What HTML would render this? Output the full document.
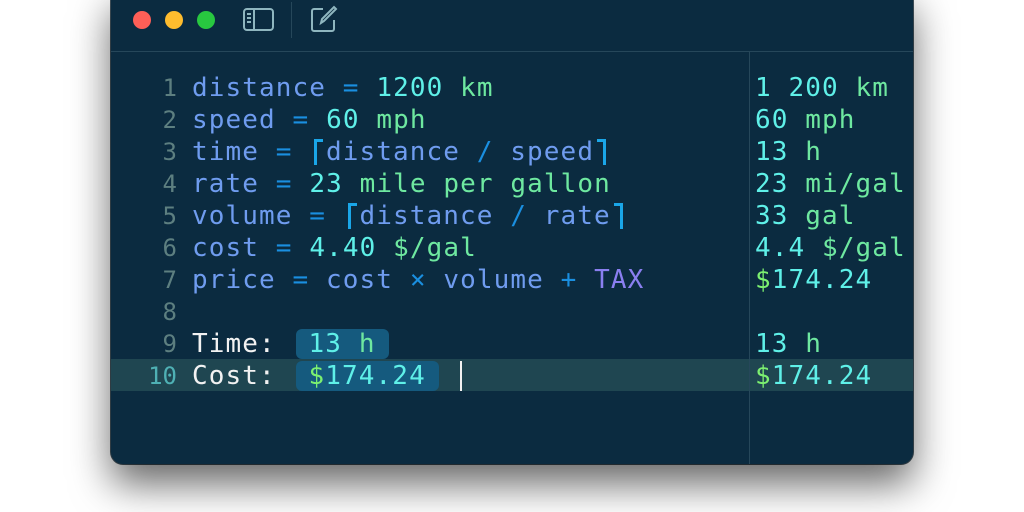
<!DOCTYPE html><html><head><style>
body{margin:0;width:1024px;height:512px;background:#fff;overflow:hidden;position:relative}
.win{position:absolute;left:111px;top:-12px;width:802px;height:476px;background:#0b2b40;border-radius:12px;box-shadow:0 20px 40px rgba(0,0,0,.6),0 0 0 1px #45555f;overflow:hidden}
.tb{position:absolute;left:0;top:0;width:802px;height:63px;border-bottom:1px solid #26475a}
.dot{position:absolute;top:23px;width:18px;height:18px;border-radius:50%}
.div{position:absolute;left:638px;top:63px;width:1px;height:420px;background:#26475a}
.hl{position:absolute;left:0;top:371px;width:802px;height:32px;background:#1f4651}
.r{position:absolute;height:32px;line-height:32px;font-family:"DejaVu Sans Mono",monospace;font-size:26px;letter-spacing:1.1px;white-space:pre;color:#6f9cef}
.n{position:absolute;left:0;width:66px;text-align:right;color:#5d7f80;font-family:"DejaVu Sans Mono",monospace;font-size:24px;height:32px;line-height:32px}
.o{color:#1a8fe0}.c{color:#5ff0e8}.u{color:#6ee8a0}.w{color:#f2f2f2}.t{color:#8a7ff0}.g{color:#7cf070}
.b{color:#1aa6e8;display:inline-block;width:16.7px;height:30px;vertical-align:top;position:relative}
.b i{position:absolute;top:3px;bottom:1px;width:3px;background:#1aa6e8}
.b i:after{content:"";position:absolute;top:0;height:3px;width:9px;background:#1aa6e8}
.bl i{left:5px}.bl i:after{left:0}
.br i{right:5px}.br i:after{right:0}
.chip{background:#155a7e;border-radius:6px;padding:0 13px;margin-left:3px}
</style></head><body>
<div class="win">
<div class="tb">
<div class="dot" style="left:22px;background:#fe5f57"></div>
<div class="dot" style="left:54px;background:#febc2e"></div>
<div class="dot" style="left:86px;background:#28c840"></div>
<svg style="position:absolute;left:131px;top:18px" width="34" height="28" viewBox="0 0 34 28" fill="none" stroke="#8fb6bf" stroke-width="2"><rect x="2" y="3" width="29" height="21" rx="3"/><line x1="12" y1="3" x2="12" y2="24"/><line x1="5" y1="8" x2="9" y2="8"/><line x1="5" y1="12" x2="9" y2="12"/><line x1="5" y1="16" x2="9" y2="16"/></svg>
<div style="position:absolute;left:180px;top:14px;width:1px;height:36px;background:#26475a"></div>
<svg style="position:absolute;left:198px;top:16px" width="30" height="30" viewBox="0 0 30 30" fill="none" stroke="#8fb6bf" stroke-width="2"><path d="M14 5H5a2 2 0 0 0-2 2v18a2 2 0 0 0 2 2h18a2 2 0 0 0 2-2v-9"/><path d="M12 19l1-4L25 3l2 2-12 12z"/></svg>
</div>
<div class="hl"></div>
<div class="div"></div>
</div>
<div style="position:absolute;left:111px;top:0;width:802px;height:464px">
<div class="n" style="top:72px">1</div><div class="n" style="top:104px">2</div><div class="n" style="top:136px">3</div><div class="n" style="top:168px">4</div><div class="n" style="top:200px">5</div><div class="n" style="top:232px">6</div><div class="n" style="top:264px">7</div><div class="n" style="top:296px">8</div><div class="n" style="top:328px">9</div><div class="n" style="top:360px;color:#4fb0b4">10</div>
</div>
<div class="r" style="left:192px;top:72px">distance <span class="o">=</span> <span class="c">1200</span> <span class="u">km</span></div>
<div class="r" style="left:192px;top:104px">speed <span class="o">=</span> <span class="c">60</span> <span class="u">mph</span></div>
<div class="r" style="left:192px;top:136px">time <span class="o">=</span> <span class="b bl"><i></i></span>distance <span class="o">/</span> speed<span class="b br"><i></i></span></div>
<div class="r" style="left:192px;top:168px">rate <span class="o">=</span> <span class="c">23</span> <span class="u">mile per gallon</span></div>
<div class="r" style="left:192px;top:200px">volume <span class="o">=</span> <span class="b bl"><i></i></span>distance <span class="o">/</span> rate<span class="b br"><i></i></span></div>
<div class="r" style="left:192px;top:232px">cost <span class="o">=</span> <span class="c">4.40</span> <span class="u">$/gal</span></div>
<div class="r" style="left:192px;top:264px">price <span class="o">=</span> cost <span class="o">×</span> volume <span class="o">+</span> <span class="t">TAX</span></div>
<div class="r w" style="left:192px;top:328px">Time: <span class="chip"><span class="c">13</span> <span class="u">h</span></span></div>
<div class="r w" style="left:192px;top:360px">Cost: <span class="chip"><span class="g">$</span><span class="c">174.24</span></span></div>
<div style="position:absolute;left:460px;top:361px;width:2px;height:30px;background:#f2f2f2"></div>
<div class="r" style="left:755px;top:72px"><span class="c">1 200</span> <span class="u">km</span></div>
<div class="r" style="left:755px;top:104px"><span class="c">60</span> <span class="u">mph</span></div>
<div class="r" style="left:755px;top:136px"><span class="c">13</span> <span class="u">h</span></div>
<div class="r" style="left:755px;top:168px"><span class="c">23</span> <span class="u">mi/gal</span></div>
<div class="r" style="left:755px;top:200px"><span class="c">33</span> <span class="u">gal</span></div>
<div class="r" style="left:755px;top:232px"><span class="c">4.4</span> <span class="u">$/gal</span></div>
<div class="r" style="left:755px;top:264px"><span class="g">$</span><span class="c">174.24</span></div>
<div class="r" style="left:755px;top:328px"><span class="c">13</span> <span class="u">h</span></div>
<div class="r" style="left:755px;top:360px"><span class="g">$</span><span class="c">174.24</span></div>
</body></html>
